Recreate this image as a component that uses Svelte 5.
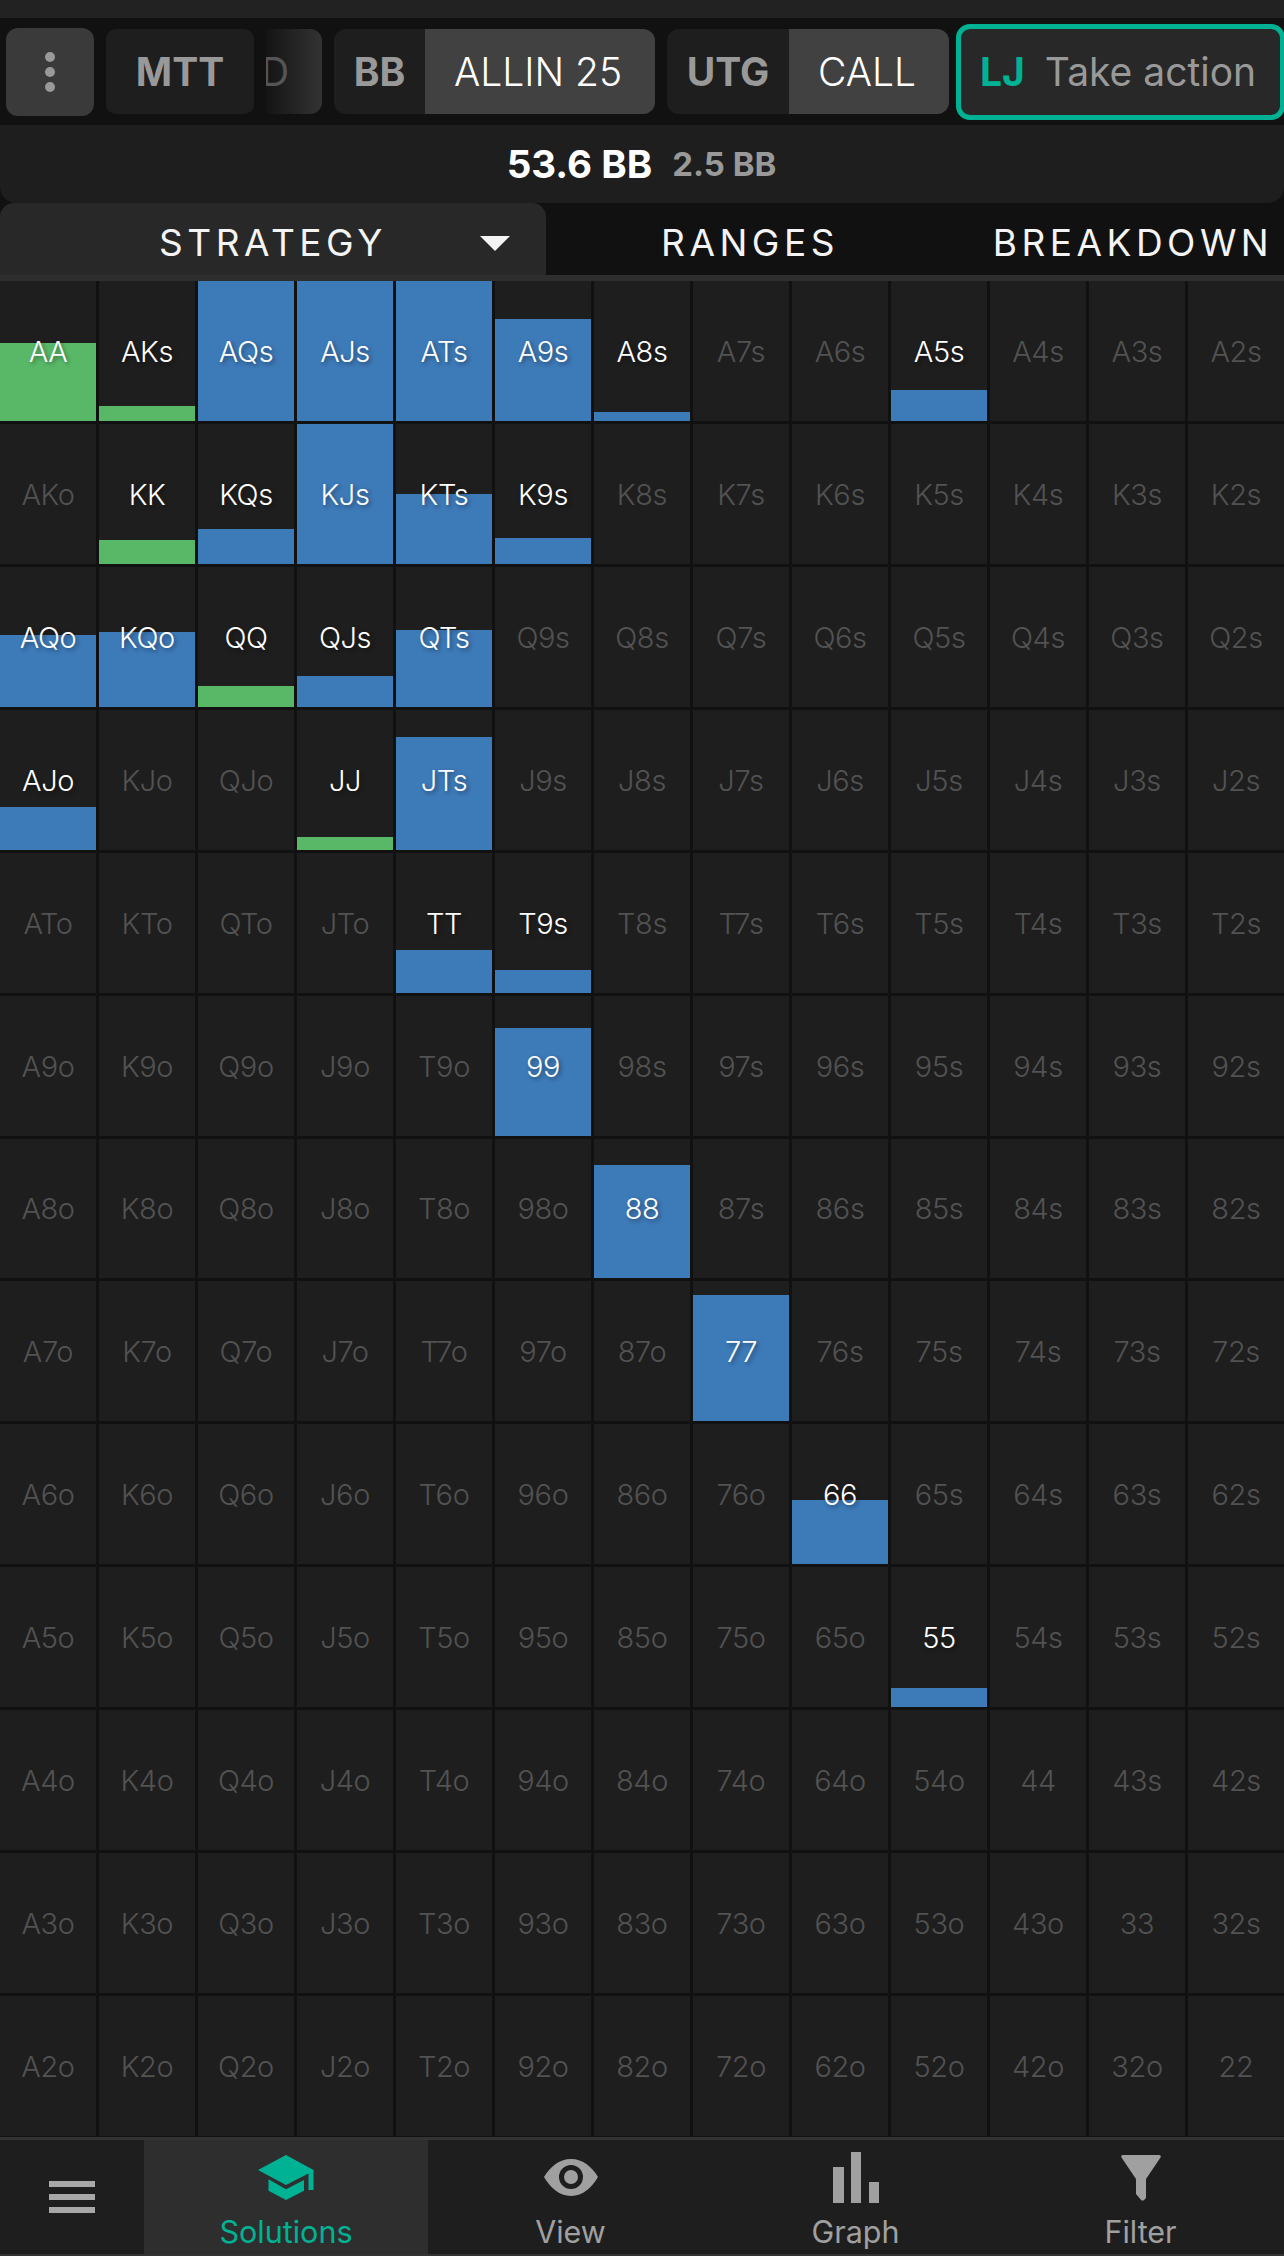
<script>
  const R = 'AKQJT98765432'.split('');
  const bars = {
    AA:[78,'g'],AKs:[15,'g'],AQs:[140,'b'],AJs:[140,'b'],ATs:[140,'b'],A9s:[102,'b'],A8s:[9,'b'],A5s:[31,'b'],
    KK:[24,'g'],KQs:[35,'b'],KJs:[140,'b'],KTs:[70,'b'],K9s:[26,'b'],
    AQo:[72,'b'],KQo:[75,'b'],QQ:[21,'g'],QJs:[31,'b'],QTs:[77,'b'],
    AJo:[43,'b'],JJ:[13,'g'],JTs:[113,'b'],
    TT:[43,'b'],T9s:[23,'b'],'99':[108,'b'],'88':[113,'b'],'77':[126,'b'],'66':[64,'b'],'55':[19,'b']
  };
  const cells = [];
  R.forEach((a,i)=>R.forEach((b,j)=>{
    const name = i===j ? a+b : i<j ? a+b+'s' : b+a+'o';
    cells.push({name, bar: bars[name]});
  }));
</script>

<div class="page">
  <div class="strip"></div>
  <div class="chips">
    <div class="menu"><i></i><i></i><i></i></div>
    <div class="chip mtt">MTT</div>
    <div class="chip fade"><span>D</span></div>
    <div class="chip pair bb"><b>BB</b><span>ALLIN 25</span></div>
    <div class="chip pair utg"><b>UTG</b><span>CALL</span></div>
    <div class="chip act"><b>LJ</b><span>Take action</span></div>
  </div>
  <div class="under">
    <div class="info"><strong>53.6 BB</strong><em>2.5 BB</em></div>
    <div class="tabs">
      <div class="tab first">STRATEGY<u></u></div>
      <div class="tab second">RANGES</div>
      <div class="tab third">BREAKDOWN</div>
    </div>
  </div>
  <div class="rule"></div>
  <div class="grid">
    {#each cells as c}
      <div class="cell" class:on={c.bar}>
        {#if c.bar}<div class="bar {c.bar[1]}" style="height:{c.bar[0]}px"></div>{/if}
        <span>{c.name}</span>
      </div>
    {/each}
  </div>
  <nav>
    <div class="burger"><i></i><i></i><i></i></div>
    <div class="item active">
      <svg width="56" height="46" viewBox="0 0 56 46" fill="#00b294"><path d="M28 0 55.500 15V35H50.500V18.500L28 30 0 15Z"/><path d="M10.500 24.300 28 34.300 46 25V35.700L28 45 10.500 35.700Z"/></svg>
      <label>Solutions</label>
    </div>
    <div class="item">
      <svg width="56" height="46" viewBox="0 0 56 46" fill="#a0a0a0"><path fill-rule="evenodd" d="M28 4C40 4 49 12 55 22 49 32 40 41 28 41 16 41 7 32 1 22 7 12 16 4 28 4ZM28 10A12 12 0 1 0 28 34 12 12 0 1 0 28 10Z"/><circle cx="28" cy="22" r="7"/></svg>
      <label>View</label>
    </div>
    <div class="item">
      <svg width="56" height="51" viewBox="0 0 56 51" class="up" fill="#a0a0a0"><path d="M5 15H16V51H5ZM23 0H33V51H23ZM41 30H51V51H41Z"/></svg>
      <label>Graph</label>
    </div>
    <div class="item">
      <svg width="56" height="46" viewBox="0 0 56 46" fill="#a0a0a0"><path d="M8.500 2.500Q7.500 0 10 0H46Q48.500 0 47.500 2.500L33 24V43L30.500 45.500 28.500 45.500 23 39V24Z"/></svg>
      <label>Filter</label>
    </div>
  </nav>
</div>

<style>
  :global(body){margin:0;background:#111;}
  .page{width:1284px;height:2256px;display:flex;flex-direction:column;font-family:Inter,"Liberation Sans",sans-serif;color:#fff;overflow:hidden;background:#111;}
  .strip{height:18px;background:#222;}
  .chips{height:107px;display:flex;align-items:center;gap:12px;padding-left:6px;background:#111;overflow:hidden;}
  .menu{width:88px;height:88px;box-sizing:border-box;flex:none;border-radius:12px;background:#3a3a3a;display:flex;flex-direction:column;align-items:center;justify-content:center;gap:5px;}
  .menu i{width:10px;height:10px;border-radius:50%;background:#999;}
  .chip{height:85px;flex:none;border-radius:10px;box-sizing:border-box;display:flex;align-items:center;font-size:39px;overflow:hidden;}
  .mtt{width:148px;background:#1e1e1e;justify-content:center;color:#999;font-weight:700;}
  .fade{width:56px;background:linear-gradient(90deg,#141414,#333);color:#555;justify-content:flex-start;border-radius:0 12px 12px 0;}
  .fade span{margin-left:-5px;font-weight:400;}
  .pair{background:#1e1e1e;border-radius:12px;}
  .pair b{color:#999;font-weight:700;display:flex;justify-content:center;}
  .pair span{background:#414141;height:100%;display:flex;align-items:center;justify-content:center;font-weight:300;flex:1;color:#fff;padding-right:4px;}
  .bb{width:321px;}
  .bb b{width:91px;}
  .utg{width:282px;}
  .utg b{width:122px;}
  .act{width:329px;height:96px;margin-left:-5px;border:5px solid #00b294;background:#282828;border-radius:14px;gap:20px;padding-left:19px;font-size:39px;}
  .act b{color:#00b294;font-weight:700;}
  .act span{color:#999;font-weight:400;}
  .under{background:#111;}
  .info{height:78px;background:#1e1e1e;border-radius:0 0 16px 16px;display:flex;align-items:center;justify-content:center;gap:20px;padding-right:1px;}
  .info strong{font-size:38.500px;font-weight:700;color:#fff;}
  .info em{font-style:normal;font-size:33px;font-weight:700;color:#999;}
  .tabs{height:72px;display:flex;font-size:37px;letter-spacing:4.500px;}
  .tab{display:flex;align-items:center;justify-content:center;box-sizing:border-box;position:relative;white-space:nowrap;color:#f4f4f4;padding-top:6px;}
  .first{width:546px;background:#282828;border-radius:14px 14px 0 0;}
  .first u{position:absolute;left:480px;top:33px;width:0;height:0;border:15px solid transparent;border-top:15px solid #f4f4f4;border-bottom:0;}
  .second{width:408px;}
  .third{width:330px;padding-left:28px;}
  .rule{height:6px;background:#2e2e2e;}
  .grid{grid-template-columns:repeat(13,96px);grid-template-rows:repeat(6,140px) 139px repeat(6,140px);display:grid;gap:3px;background:#111;padding-bottom:1px;}
  .cell{position:relative;background:#1e1e1e;display:flex;align-items:center;justify-content:center;font-size:29px;letter-spacing:-.4px;font-weight:300;color:#525252;overflow:hidden;}
  .cell span{position:relative;}
  .cell.on{color:#fff;}
  .cell.on span{text-shadow:2px 2px 4px rgba(0,0,0,.4);}
  .bar{position:absolute;left:0;right:0;bottom:0;}
  .bar.b{background:#3d7ab8;}
  .bar.g{background:#59b868;}
  nav{height:114px;border-top:3px solid #333;border-bottom:2px solid #333;display:flex;background:#1e1e1e;box-sizing:content-box;}
  .burger{width:144px;display:flex;flex-direction:column;align-items:flex-start;justify-content:center;gap:7px;padding-left:49px;box-sizing:border-box;padding-bottom:1px;}
  .burger i{width:46px;height:6px;background:#a8a8a8;}
  .item{width:285px;display:flex;flex-direction:column;align-items:center;padding-top:15px;box-sizing:border-box;color:#a0a0a0;}
  .item.active{background:#2e2e2e;width:284px;color:#00b294;}
  .item svg{display:block;}
  .item .up{margin-top:-3px;margin-bottom:-2px;}
  label{font-size:30.500px;line-height:36px;margin-top:13px;}
</style>
